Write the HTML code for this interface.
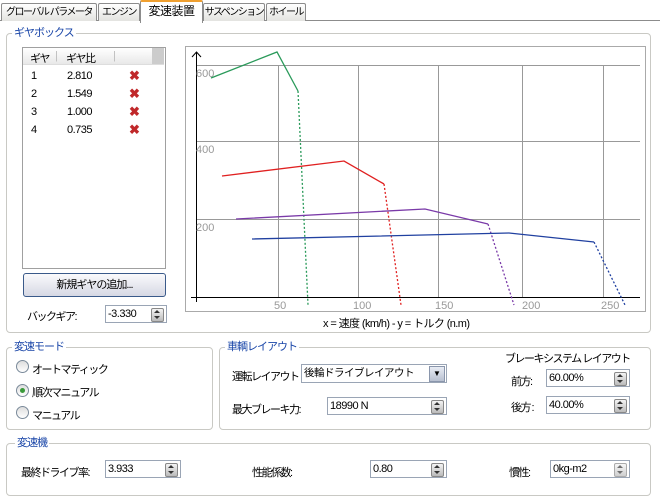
<!DOCTYPE html><html><head><meta charset="utf-8"><style>
body{margin:0;width:660px;height:500px;background:#fff;font-family:"Liberation Sans","Noto Sans CJK JP",sans-serif;font-size:11px;color:#000;position:relative;overflow:hidden;white-space:nowrap}
.a{position:absolute}
.k{letter-spacing:-1.5px}
.tab{position:absolute;top:3px;height:17px;border:1px solid #8c8c8c;border-bottom:none;background:linear-gradient(#fff,#e3e3e0);font-size:10px;line-height:17px;text-align:center;border-radius:2px 2px 0 0;letter-spacing:-1.5px;overflow:hidden}
.grp{position:absolute;border:1px solid #c9c9c4;border-radius:4px}
.lg{position:absolute;background:#fff;color:#1a46a8;padding:0 2px;font-size:11px;line-height:12px;letter-spacing:-1px}
.inp{position:absolute;height:16px;border:1px solid #9aa5b5;background:#fff;line-height:16px;padding-left:2px;font-size:11px;letter-spacing:-0.5px;overflow:hidden}
.spin{position:absolute;right:2px;top:2px;width:11px;height:12px;border:1px solid #888;border-radius:2px;background:linear-gradient(#f4f4f4,#bbb)}
.spin:before{content:"";position:absolute;left:2px;top:1px;border:3px solid transparent;border-bottom:3px solid #333;border-top:0}
.spin:after{content:"";position:absolute;left:2px;top:7px;border:3px solid transparent;border-top:3px solid #333;border-bottom:0}
.rad{position:absolute;width:11px;height:11px;border:1px solid #7a8a9a;border-radius:50%;background:linear-gradient(#ddd,#fff)}
.x{color:#c0282a;font-weight:bold;font-size:13px}
</style></head><body>
<div class="a" style="left:0;top:20px;width:660px;height:1px;background:#8c8c8c"></div>
<div class="tab" style="left:1px;width:94px">グローバル パラメータ</div>
<div class="tab" style="left:98px;width:40px">エンジン</div>
<div class="tab" style="left:140px;top:0;height:21px;width:61px;background:#fff;border-top:2px solid #f0a030;font-size:12px;line-height:19px;letter-spacing:-0.5px">変速装置</div>
<div class="tab" style="left:203px;width:60px">サスペンション</div>
<div class="tab" style="left:266px;width:38px">ホイール</div>

<div class="grp" style="left:6px;top:33px;width:643px;height:298px"></div>
<div class="lg" style="left:12px;top:27px">ギヤボックス</div>
<div class="a" style="left:22px;top:47px;width:142px;height:220px;border:1px solid #a0a0a0;background:#fff"></div>
<div class="a" style="left:23px;top:48px;width:141px;height:16px;background:linear-gradient(#fff,#e8e8e8);border-bottom:1px solid #ddd"></div>
<div class="a k" style="left:30px;top:50px">ギヤ</div><div class="a" style="left:55px;top:50px;color:#bbb">|</div>
<div class="a k" style="left:66px;top:50px">ギヤ比</div><div class="a" style="left:113px;top:50px;color:#bbb">|</div><div class="a" style="left:152px;top:48px;width:12px;height:16px;background:#ccc"></div>
<div class="a" style="left:31px;top:67px;line-height:18px">1<br>2<br>3<br>4</div>
<div class="a" style="left:67px;top:67px;line-height:18px;letter-spacing:-0.5px">2.810<br>1.549<br>1.000<br>0.735</div>
<div class="a x" style="left:129px;top:67px;line-height:18px">✖<br>✖<br>✖<br>✖</div>
<div class="a" style="left:23px;top:273px;width:141px;height:22px;border:1px solid #3a5a8a;border-radius:3px;background:linear-gradient(#fafafc,#d6d8e4);text-align:center;line-height:22px;letter-spacing:-1px">新規ギヤの追加...</div>
<div class="a k" style="left:27px;top:308px">バックギア:</div>
<div class="inp" style="left:105px;top:305px;width:58px">-3.330<div class="spin"></div></div>

<svg class="a" style="left:185px;top:46px" width="464" height="270">
<rect x="0.5" y="0.5" width="460" height="265" fill="#fff" stroke="#aaa"/>
<g stroke="#999" stroke-width="1">
<line x1="11" y1="19.5" x2="455" y2="19.5"/><line x1="11" y1="95.5" x2="455" y2="95.5"/><line x1="11" y1="173.5" x2="455" y2="173.5"/>
<line x1="93.5" y1="19" x2="93.5" y2="251"/><line x1="173.5" y1="19" x2="173.5" y2="251"/><line x1="253.5" y1="19" x2="253.5" y2="251"/><line x1="337.5" y1="19" x2="337.5" y2="251"/><line x1="418.5" y1="19" x2="418.5" y2="251"/>
</g>
<line x1="11.5" y1="6" x2="11.5" y2="256" stroke="#000"/><line x1="6" y1="251.5" x2="455" y2="251.5" stroke="#000"/>
<path d="M7 11 L11.5 6 L16 11" fill="none" stroke="#000"/>
<g fill="#999" font-size="11" font-family="Liberation Sans">
<text x="11" y="31">600</text><text x="11" y="107">400</text><text x="11" y="185">200</text>
<text x="89" y="263">50</text><text x="168" y="263">100</text><text x="250" y="263">150</text><text x="337" y="263">200</text><text x="416" y="263">250</text></g>
<g fill="none" stroke-width="1.3">
<path d="M26 32 L92 6 L113 45" stroke="#2a9a5a"/><path d="M113 45 L123 259" stroke="#2a9a5a" stroke-dasharray="2,2"/>
<path d="M37 130 L159 115 L199 138" stroke="#e02020"/><path d="M199 138 L216 259" stroke="#e02020" stroke-dasharray="2,2"/>
<path d="M51 173 L240 163 L303 178" stroke="#7a3aa8"/><path d="M303 178 L329 259" stroke="#7a3aa8" stroke-dasharray="2,2"/>
<path d="M67 193 L324 187 L409 196" stroke="#2040a0"/><path d="M409 196 L440 259" stroke="#2040a0" stroke-dasharray="2,2"/>
</g></svg>
<div class="a" style="left:323px;top:315px;letter-spacing:-0.6px">x = 速度 (km/h) - y = トルク (n.m)</div>

<div class="grp" style="left:6px;top:347px;width:205px;height:81px"></div>
<div class="lg" style="left:12px;top:341px">変速モード</div>
<div class="rad" style="left:16px;top:360px"></div><div class="a k" style="left:32px;top:361px">オートマティック</div>
<div class="rad" style="left:16px;top:384px"></div><div class="a" style="left:20px;top:388px;width:5px;height:5px;border-radius:50%;background:#3a9a3a"></div><div class="a k" style="left:32px;top:384px">順次マニュアル</div>
<div class="rad" style="left:16px;top:406px"></div><div class="a k" style="left:32px;top:407px">マニュアル</div>

<div class="grp" style="left:219px;top:347px;width:430px;height:81px"></div>
<div class="lg" style="left:225px;top:341px">車輌レイアウト</div>
<div class="a k" style="left:232px;top:368px">運転レイアウト</div>
<div class="inp k" style="left:301px;top:364px;width:142px;height:17px;font-size:10.5px">後輪ドライブレイアウト<div class="a" style="right:1px;top:1px;width:14px;height:14px;background:linear-gradient(#e8ecf4,#b8c0d0);border:1px solid #8a96ac;text-align:center;font-size:8px;line-height:14px;letter-spacing:0">▼</div></div>
<div class="a k" style="left:232px;top:401px">最大ブレーキ力:</div>
<div class="inp" style="left:327px;top:397px;width:116px">18990 N<div class="spin"></div></div>
<div class="a k" style="left:505px;top:350px">ブレーキシステム レイアウト</div>
<div class="a k" style="left:511px;top:373px">前方:</div>
<div class="inp" style="left:546px;top:369px;width:80px">60.00%<div class="spin"></div></div>
<div class="a k" style="left:511px;top:399px">後方 :</div>
<div class="inp" style="left:546px;top:396px;width:80px">40.00%<div class="spin"></div></div>

<div class="grp" style="left:6px;top:443px;width:643px;height:51px"></div>
<div class="lg" style="left:15px;top:437px">変速機</div>
<div class="a k" style="left:21px;top:464px">最終ドライブ率:</div>
<div class="inp" style="left:105px;top:460px;width:72px">3.933<div class="spin"></div></div>
<div class="a k" style="left:252px;top:464px">性能係数:</div>
<div class="inp" style="left:370px;top:460px;width:73px">0.80<div class="spin"></div></div>
<div class="a k" style="left:509px;top:464px">慣性:</div>
<div class="inp" style="left:550px;top:460px;width:76px">0kg-m2<div class="spin" style="opacity:.7"></div></div>
</body></html>
